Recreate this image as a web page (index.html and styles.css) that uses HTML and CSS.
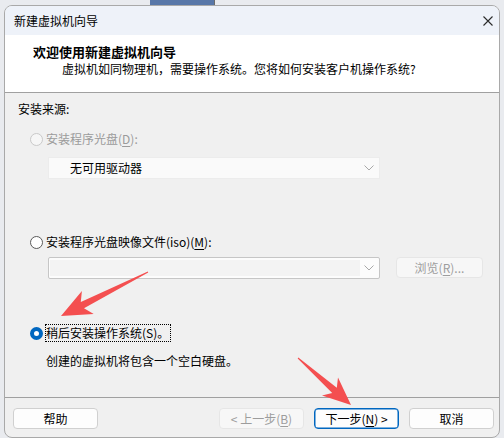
FILE: index.html
```html
<!DOCTYPE html>
<html lang="zh-CN">
<head>
<meta charset="utf-8">
<title>新建虚拟机向导</title>
<link rel="stylesheet" href="styles.css">
</head>
<body>
<div class="win">
  <div class="titlebar">
    <span class="title">新建虚拟机向导</span>
    <svg class="close" width="10" height="10" viewBox="0 0 10 10"><path d="M0.5 0.5 L9.5 9.5 M9.5 0.5 L0.5 9.5" stroke="#2b2b2b" stroke-width="1.1" fill="none"/></svg>
  </div>
  <div class="header">
    <div class="h-title">欢迎使用新建虚拟机向导</div>
    <div class="h-sub">虚拟机如同物理机，需要操作系统。您将如何安装客户机操作系统?</div>
  </div>
  <div class="content">
    <div class="section-label">安装来源:</div>
    <div class="radio-row row1 disabled"><span class="radio"></span><span class="label">安装程序光盘(<u>D</u>):</span></div>
    <div class="combo combo-disabled"><span class="combo-text">无可用驱动器</span><svg class="chev" width="10" height="6" viewBox="0 0 10 6"><path d="M0.5 0.5 L5 5 L9.5 0.5" stroke="#a8a8a8" fill="none"/></svg></div>
    <div class="radio-row row2"><span class="radio"></span><span class="label">安装程序光盘映像文件(iso)(<u>M</u>):</span></div>
    <div class="iso-row">
      <div class="combo combo-iso"><div class="edit"></div><svg class="chev" width="10" height="6" viewBox="0 0 10 6"><path d="M0.5 0.5 L5 5 L9.5 0.5" stroke="#a8a8a8" fill="none"/></svg></div>
      <div class="btn btn-disabled browse">浏览(<u>R</u>)...</div>
    </div>
    <div class="radio-row row3"><span class="radio checked"></span><span class="label focus">稍后安装操作系统(S)。</span></div>
    <div class="desc">创建的虚拟机将包含一个空白硬盘。</div>
  </div>
  <div class="footer">
    <div class="btn">帮助</div>
    <div class="nav">
      <div class="btn btn-disabled">&lt; 上一步(<u>B</u>)</div>
      <div class="btn btn-default">下一步(<u>N</u>) &gt;</div>
      <div class="btn">取消</div>
    </div>
  </div>
</div>
<svg class="annot" width="504" height="438" viewBox="0 0 504 438">
  <polygon fill="#f44f50" points="148.2,272.4 84.0,308.3 93.7,314.1 61,316 81.9,290.9 80.8,302.1 147.8,271.6"/>
  <polygon fill="#f44f50" points="298.3,357.6 336.8,387.8 338.0,377.4 351,405 322.0,395.4 332.2,393.0 297.7,358.4"/>
</svg>
</body>
</html>
```
FILE: styles.css
```css
* { box-sizing: border-box; }

html, body { margin: 0; }

body {
  width: 504px;
  height: 438px;
  overflow: hidden;
  position: relative;
  padding: 5px 0 0 4px;
  background:
    linear-gradient(#5877a8, #5877a8) 150px 0 / 64px 5px no-repeat,
    linear-gradient(#6b6b6b, #6b6b6b) 214px 0 / 1px 5px no-repeat,
    #e9ebef;
  font-family: "Noto Sans CJK SC", "Microsoft YaHei", sans-serif;
  font-size: 12px;
  color: #000;
}

u { text-decoration: underline; text-underline-offset: 2px; }

.win {
  width: 496px;
  height: 433px;
  border: 1px solid #a9a9a9;
  border-radius: 8px;
  overflow: hidden;
  display: flex;
  flex-direction: column;
  background: #f0f0f0;
}

.titlebar {
  height: 29px;
  flex: none;
  background: #eef2f9;
  display: flex;
  align-items: center;
  justify-content: space-between;
  padding: 0 6px 0 9px;
}
.title { line-height: 16px; }
.close { display: block; }

.header {
  height: 58px;
  flex: none;
  background: #fff;
  border-bottom: 1px solid #a0a0a0;
  padding: 8px 0 0 28px;
}
.h-title { font-weight: bold; font-size: 13px; line-height: 18px; }
.h-sub { line-height: 16px; padding-left: 29px; }

.content {
  flex: 1;
  padding: 6px 0 0 13px;
}

.section-label { line-height: 20px; height: 20px; }

.radio-row {
  display: flex;
  align-items: center;
  height: 20px;
  margin-left: 12px;
}
.row1 { margin-top: 10px; }
.row2 { margin-top: 53px; }
.row3 { margin-top: 44px; }

.radio {
  width: 13px;
  height: 13px;
  border-radius: 50%;
  border: 1px solid #5a5a5a;
  background: #fff;
  margin-right: 2px;
  flex: none;
}
.disabled .radio { border-color: #c9c9c9; background: #f6f6f6; }
.disabled .label { color: #9b9b9b; }
.radio.checked { border: 4px solid #0067c0; background: #fff; }

.label {
  line-height: 16px;
  border: 1px dotted transparent;
  padding: 0 1px 0 0;
}
.label.focus { border-color: #000; }

.combo {
  width: 332px;
  height: 22px;
  margin-left: 30px;
  display: flex;
  align-items: center;
  justify-content: space-between;
  padding-right: 5px;
}
.combo-disabled {
  margin-top: 8px;
  background: #fafafa;
  border: 1px solid #ececec;
  padding-left: 21px;
}
.combo-text { line-height: 16px; }
.chev { display: block; flex: none; }

.iso-row {
  display: flex;
  margin-top: 5px;
  height: 22px;
}
.combo-iso {
  background: #fcfcfc;
  border: 1px solid #c6c6c6;
  border-radius: 2px;
  padding: 2px 5px 2px 1px;
}
.edit {
  width: 310px;
  height: 100%;
  background: #f3f3f3;
}

.desc {
  margin-top: 8px;
  margin-left: 28px;
  line-height: 20px;
}

.btn {
  width: 85px;
  height: 21px;
  border: 1px solid #d0d0d0;
  border-radius: 4px;
  background: #fdfdfd;
  display: flex;
  align-items: center;
  justify-content: center;
  line-height: 16px;
}
.btn-disabled {
  background: #f7f7f7;
  border-color: #e6e6e6;
  color: #9d9d9d;
}
.btn-default {
  border-color: #0067c0;
  box-shadow: inset 0 0 0 0.5px #0067c0;
}
.browse {
  width: 87px;
  margin-left: 16px;
}

.footer {
  height: 40px;
  flex: none;
  border-top: 1px solid #a0a0a0;
  padding: 10px 5px 0 8px;
  display: flex;
  justify-content: space-between;
  align-items: flex-start;
}
.nav { display: flex; gap: 10px; }

.annot {
  position: absolute;
  left: 0;
  top: 0;
  pointer-events: none;
}
```
